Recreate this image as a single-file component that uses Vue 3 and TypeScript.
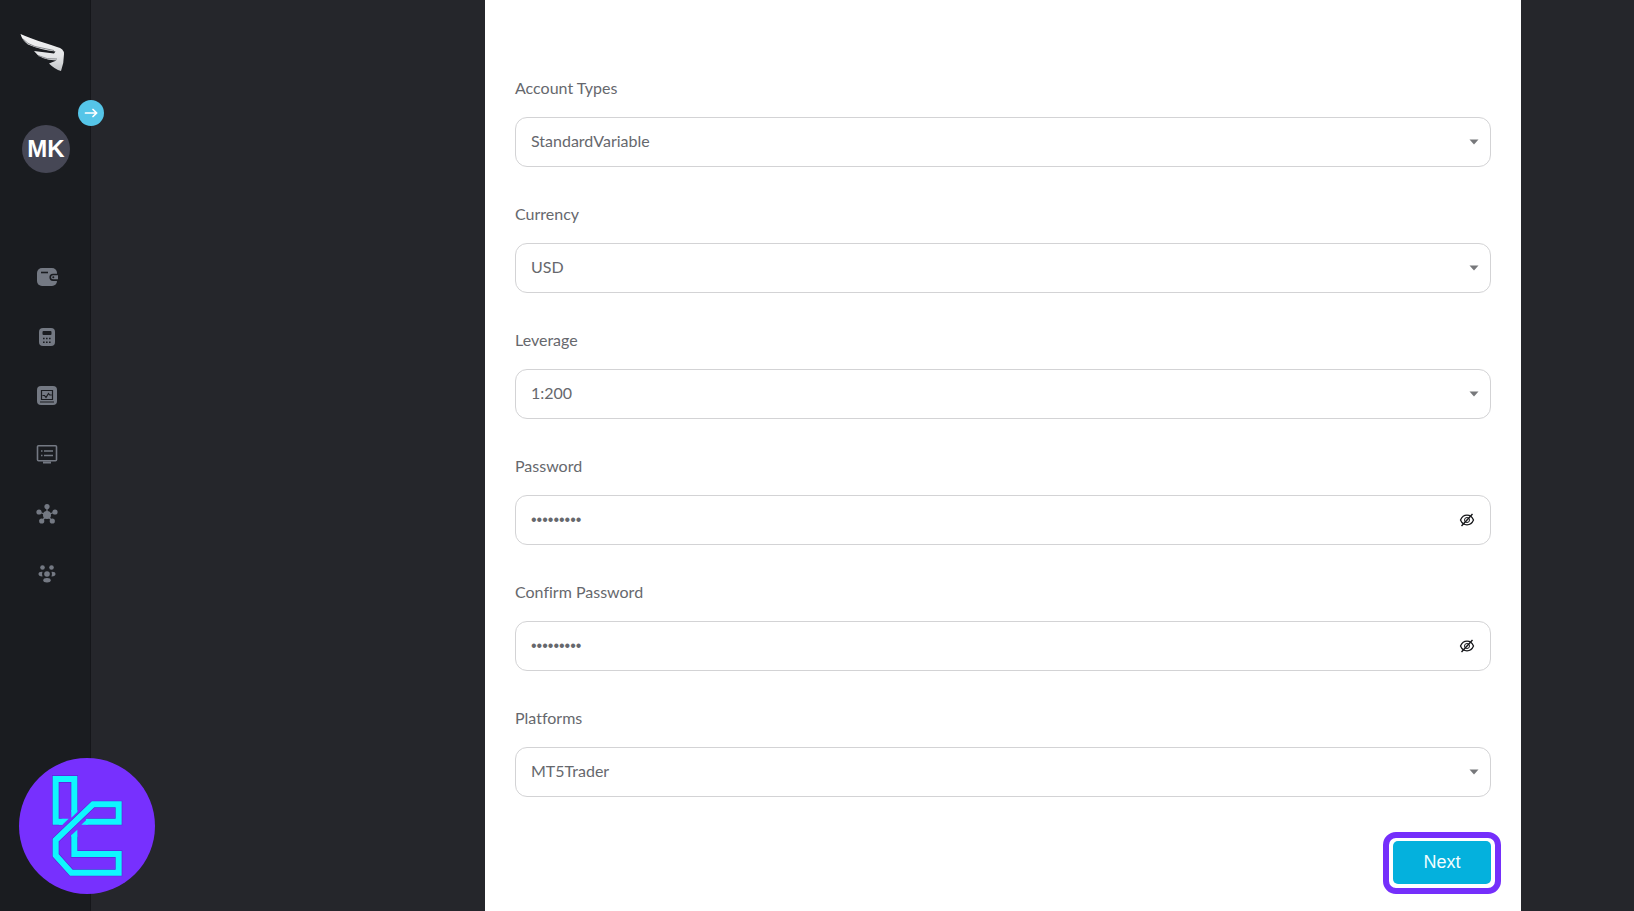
<script setup lang="ts">
import { reactive, ref } from 'vue'

interface Field {
  id: string
  label: string
  kind: 'select' | 'password'
  options?: string[]
}

const fields: Field[] = [
  { id: 'account-type', label: 'Account Types', kind: 'select', options: ['StandardVariable'] },
  { id: 'currency', label: 'Currency', kind: 'select', options: ['USD'] },
  { id: 'leverage', label: 'Leverage', kind: 'select', options: ['1:200'] },
  { id: 'password', label: 'Password', kind: 'password' },
  { id: 'confirm-password', label: 'Confirm Password', kind: 'password' },
  { id: 'platform', label: 'Platforms', kind: 'select', options: ['MT5Trader'] },
]

const values = reactive<Record<string, string>>({
  'account-type': 'StandardVariable',
  currency: 'USD',
  leverage: '1:200',
  password: 'Secret#12',
  'confirm-password': 'Secret#12',
  platform: 'MT5Trader',
})

const revealed = reactive<Record<string, boolean>>({})
const expanded = ref(false)
</script>

<template>
  <div class="layout">
    <aside class="sidebar">
      <a class="brand" href="#" aria-label="Home">
        <svg width="48" height="42" viewBox="0 0 48 42" aria-hidden="true">
          <defs>
            <linearGradient id="wing" x1="0" y1="0" x2="0" y2="1">
              <stop offset="0" stop-color="#f4f4f5" />
              <stop offset="0.6" stop-color="#e4e5e7" />
              <stop offset="1" stop-color="#c2c4c7" />
            </linearGradient>
          </defs>
          <path fill="url(#wing)" d="M1.500 2 C12 7 27 11 38 15 Q45 16.500 45 22 Q45 31 42 39 Q36 37.500 30 31.500 L37.500 28.500 Q21 28 15 19 L35 21.500 L36.500 19.500 Q22 18 9 12.500 Q3 8 1.500 2 Z" />
          <path fill="none" stroke="#8a8c90" stroke-width="1" d="M4 7 Q8 12 16 14.500 L35 18.500 M19 23.500 Q28 28 38 27" />
        </svg>
      </a>
      <button class="avatar" type="button">MK</button>
      <nav class="nav" aria-label="Main">
        <a href="#" aria-label="Wallet">
          <svg width="24" height="24" viewBox="0 0 24 24" aria-hidden="true">
            <rect x="2" y="3" width="20" height="18" rx="5" fill="#747983" />
            <path d="M6 7.500h7" stroke="#1a1c20" stroke-width="1.600" />
            <path d="M23 9.500h-5a2.800 2.800 0 0 0 0 5.600h5" fill="#747983" stroke="#1a1c20" stroke-width="1.600" />
            <circle cx="18.300" cy="12.300" r="1" fill="#1a1c20" />
          </svg>
        </a>
        <a href="#" aria-label="Calculator">
          <svg width="24" height="24" viewBox="0 0 24 24" aria-hidden="true">
            <rect x="4" y="4" width="16" height="18" rx="4" fill="#747983" />
            <rect x="7.500" y="7" width="9" height="4" rx="1" fill="#1a1c20" />
            <path d="M8 14.500h8M8 18.200h8" stroke="#1a1c20" stroke-width="1.600" stroke-dasharray="1.600 1.400" />
          </svg>
        </a>
        <a href="#" aria-label="Trading">
          <svg width="24" height="24" viewBox="0 0 24 24" aria-hidden="true">
            <rect x="2" y="3" width="20" height="19" rx="4" fill="#747983" />
            <path d="M6.500 7.500h11v9h-11zM5 19h14M7.500 12.500h2l1.500 2 2.500-4 1.200 1.500h2" fill="none" stroke="#1a1c20" stroke-width="1.200" />
          </svg>
        </a>
        <a href="#" aria-label="Orders">
          <svg width="24" height="24" viewBox="0 0 24 24" aria-hidden="true">
            <rect x="2.500" y="3.800" width="19" height="15" rx="1" fill="none" stroke="#747983" stroke-width="1.600" />
            <path d="M6 9h1.500M9 9h9M6 13.500h1.500M9 13.500h9" stroke="#747983" stroke-width="1.500" />
            <path d="M8 20.500h8" stroke="#747983" stroke-width="2" />
          </svg>
        </a>
        <a href="#" aria-label="Network">
          <svg width="24" height="24" viewBox="0 0 24 24" aria-hidden="true">
            <path d="M12 14V5.500M12 14L4 11M12 14L20 11M12 14L6.500 20.500M12 14L17.500 20.500" stroke="#747983" stroke-width="1.300" />
            <g fill="#747983">
              <circle cx="12" cy="14" r="4" /><circle cx="12" cy="5.500" r="2.600" />
              <circle cx="4" cy="11" r="2.600" /><circle cx="20" cy="11" r="2.600" />
              <circle cx="6.700" cy="20" r="2.600" /><circle cx="17.300" cy="20" r="2.600" />
            </g>
          </svg>
        </a>
        <a href="#" aria-label="Partners">
          <svg width="24" height="24" viewBox="0 0 24 24" aria-hidden="true">
            <g fill="#747983">
              <circle cx="7.500" cy="7.500" r="2.300" /><circle cx="16.500" cy="7.500" r="2.300" />
              <circle cx="12" cy="14" r="2.800" />
              <path d="M7.500 11.700Q3.500 11.500 3.500 14T7.500 16.400Q6.500 14 7.500 11.700ZM16.500 11.700Q20.500 11.500 20.500 14T16.500 16.400Q17.500 14 16.500 11.700Z" />
              <ellipse cx="12" cy="20.300" rx="3.700" ry="2.200" />
            </g>
          </svg>
        </a>
      </nav>
      <button class="toggle" type="button" aria-label="Toggle menu" :aria-expanded="expanded" @click="expanded = !expanded">
        <svg width="14" height="10" viewBox="0 0 14 10" aria-hidden="true">
          <path d="M1.500 5h11M9 1.500 12.700 5 9 8.500" fill="none" stroke="#fff" stroke-width="1.700" stroke-linecap="round" stroke-linejoin="round" />
        </svg>
      </button>
    </aside>

    <main class="content">
      <form class="panel" @submit.prevent>
        <div v-for="field in fields" :key="field.id" class="field">
          <label :for="field.id">{{ field.label }}</label>
          <div class="control">
            <template v-if="field.kind === 'select'">
              <select :id="field.id" v-model="values[field.id]">
                <option v-for="option in field.options" :key="option" :value="option">{{ option }}</option>
              </select>
              <svg class="caret" width="10" height="6" viewBox="0 0 10 6" aria-hidden="true">
                <path d="M.5 .5h9L5 5.500z" fill="#77787b" />
              </svg>
            </template>
            <template v-else>
              <input :id="field.id" v-model="values[field.id]" :type="revealed[field.id] ? 'text' : 'password'" />
              <button class="reveal" type="button" aria-label="Show password" @click="revealed[field.id] = !revealed[field.id]">
                <svg width="16" height="14" viewBox="0 0 16 14" fill="none" stroke="#16171a" aria-hidden="true">
                  <path d="M1.500 7C3 3.500 5.500 2.200 8 2.200S13 3.500 14.500 7C13 10.500 10.500 11.800 8 11.800S3 10.500 1.500 7Z" stroke-width="1.300" />
                  <circle cx="8" cy="7" r="2.500" stroke-width="1" />
                  <path d="M2.500 13 13.500 1" stroke-width="1.400" />
                </svg>
              </button>
            </template>
          </div>
        </div>
        <div class="actions">
          <div class="highlight">
            <button class="next" type="submit">Next</button>
          </div>
        </div>
      </form>
    </main>

    <svg class="badge" width="136" height="136" viewBox="57 54 408 408" aria-hidden="true">
      <circle cx="261" cy="258" r="204" fill="#7730fe" />
      <g fill="none" stroke-linejoin="miter">
        <g stroke="#5a28d8" stroke-width="22">
          <path d="M188 245H167V117H223V216" />
          <path d="M258 245H356V193H279L167 300V346L214 398H356V342H223V284" />
        </g>
        <g stroke="#0ff6ff" stroke-width="18">
          <path d="M188 245H167V117H223V216" />
          <path d="M258 245H356V193H279L167 300V346L214 398H356V342H223V284" />
        </g>
        <path fill="#0ff6ff" d="M185 236H206L187 254H176ZM214 210H232V216L214 233ZM263 236V254H244ZM214 286 232 269V290H214Z" />
      </g>
    </svg>
  </div>
</template>

<style>
body {
  margin: 0;
  background: #25262b;
}
</style>

<style scoped>
.layout {
  display: flex;
  min-height: 100vh;
  background: #25262b;
  color: #66686d;
  font-family: Lato, "Liberation Sans", sans-serif;
  font-size: 16px;
  font-variant-ligatures: none;
  line-height: 24px;
}

button,
select,
input {
  margin: 0;
  padding: 0;
  border: 0;
  background: none;
  color: inherit;
  font: inherit;
}

.sidebar {
  position: relative;
  box-sizing: border-box;
  display: flex;
  flex: 0 0 91px;
  flex-direction: column;
  align-items: center;
  padding-top: 32px;
  padding-left: 2px;
  border-right: 1px solid #15161a;
  background: #1a1c20;
}

.brand {
  display: flex;
  padding-right: 6px;
}

.avatar {
  width: 48px;
  height: 48px;
  margin-top: 51px;
  border-radius: 50%;
  background: #464755;
  color: #fff;
  font: bold 24px/46px "Liberation Sans", sans-serif;
}

.nav {
  display: flex;
  flex-direction: column;
  margin-top: 74px;
}

.nav a {
  display: flex;
  align-items: center;
  justify-content: center;
  width: 84px;
  height: 59px;
  padding-left: 2px;
}

.toggle {
  position: absolute;
  top: 100px;
  right: -14px;
  display: flex;
  align-items: center;
  justify-content: center;
  width: 26px;
  height: 26px;
  border-radius: 50%;
  background: #55c5e8;
}

.content {
  flex: 1;
  min-width: 0;
  padding: 0 113px 0 394px;
  display: flex;
}

.panel {
  box-sizing: border-box;
  flex: 1;
  min-width: 0;
  padding: 76px 30px 16px;
  background: #fff;
}

.field {
  display: flex;
  flex-direction: column;
  gap: 17px;
  margin-bottom: 35px;
}

.control {
  box-sizing: border-box;
  display: flex;
  align-items: center;
  height: 50px;
  padding-right: 11px;
  border: 1px solid #d3d3d5;
  border-radius: 12px;
}

.control select,
.control input {
  flex: 1;
  min-width: 0;
  height: 48px;
  padding-left: 15px;
  outline: none;
  appearance: none;
}

.control select {
  margin-right: -10px;
  padding-bottom: 2px;
}

.control input {
  font-family: "Liberation Sans", sans-serif;
}

.caret {
  pointer-events: none;
}

.reveal {
  display: flex;
  padding: 4px;
}

.actions {
  display: flex;
  justify-content: flex-end;
  margin-right: -10px;
}

.highlight {
  padding: 3px 4px 4px;
  border: 6px solid #752ffb;
  border-radius: 13px;
}

.next {
  display: block;
  width: 98px;
  height: 43px;
  padding-bottom: 2px;
  border-radius: 5px;
  background: #04b1dd;
  color: #f2fdff;
  font-family: "Liberation Sans", sans-serif;
  font-size: 18px;
}

.badge {
  position: absolute;
  bottom: 17px;
  left: 19px;
}
</style>
